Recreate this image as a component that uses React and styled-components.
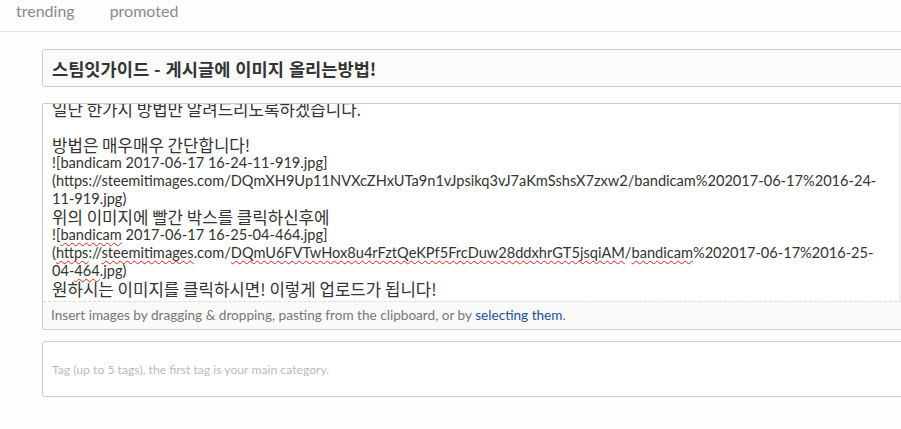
import styled, { createGlobalStyle } from 'styled-components';

const GlobalStyle = createGlobalStyle`
  body {
    margin: 0;
    background: #fdfdfd;
    overflow: hidden;
    font-family: Lato, "Noto Sans CJK KR", sans-serif;
  }
`;

const bodyLines = [
  { text: '일단 한가지 방법만 알려드리도록하겠습니다.' },
  { text: '\u00a0' },
  { text: '방법은 매우매우 간단합니다!' },
  { latin: true, parts: ['![bandicam 2017-06-17 16-24-11-919.jpg]'] },
  { latin: true, parts: ['(https://steemitimages.com/DQmXH9Up11NVXcZHxUTa9n1vJpsikq3vJ7aKmSshsX7zxw2/bandicam%202017-06-17%2016-24-'] },
  { latin: true, parts: ['11-919.jpg)'] },
  { text: '위의 이미지에 빨간 박스를 클릭하신후에' },
  { latin: true, parts: ['![', { bad: 'bandicam' }, ' 2017-06-17 16-25-04-464.jpg]'] },
  {
    latin: true,
    parts: [
      '(', { bad: 'https' }, '://', { bad: 'steemitimages' }, '.com/',
      { bad: 'DQmU6FVTwHox8u4rFztQeKPf5FrcDuw28ddxhrGT5jsqiAM' }, '/',
      { bad: 'bandicam' }, '%202017-06-17%2016-25-',
    ],
  },
  { latin: true, parts: ['04-', { bad: '464' }, '.jpg)'] },
  { text: '원하시는 이미지를 클릭하시면! 이렇게 업로드가 됩니다!' },
];

function App() {
  return (
    <>
      <GlobalStyle />
      <NavBar>
        <NavItem>trending</NavItem>
        <NavItem>promoted</NavItem>
      </NavBar>
      <Form>
        <TitleInput>스팀잇가이드 - 게시글에 이미지 올리는방법!</TitleInput>
        <EditorBox>
          <EditorMain>
            <TextArea>
              <Scrolled>
                {bodyLines.map((line, i) => (
                  <Line key={i} $latin={line.latin}>
                    {line.parts
                      ? line.parts.map((p, j) =>
                          typeof p === 'string' ? p : <Misspelled key={j}>{p.bad}</Misspelled>
                        )
                      : line.text}
                  </Line>
                ))}
              </Scrolled>
            </TextArea>
            <Scrollbar>
              <Thumb />
            </Scrollbar>
          </EditorMain>
          <DropHint>
            Insert images by dragging &amp; dropping, pasting from the clipboard, or by{' '}
            <HintLink>selecting them</HintLink>.
          </DropHint>
        </EditorBox>
        <TagInput>Tag (up to 5 tags), the first tag is your main category.</TagInput>
      </Form>
    </>
  );
}

const NavBar = styled.nav`
  display: flex;
  align-items: flex-start;
  gap: 35px;
  height: 31px;
  padding: 0 16px;
  background: #fefefe;
  border-bottom: 1px solid #e6e6e6;
`;

const NavItem = styled.span`
  font-family: Lato, sans-serif;
  font-size: 16px;
  line-height: 21px;
  color: #8a8a8a;
`;

const Form = styled.div`
  display: flex;
  flex-direction: column;
  width: 876px;
  margin-left: 42px;
`;

const TitleInput = styled.div`
  display: flex;
  align-items: center;
  box-sizing: border-box;
  height: 38px;
  margin-top: 17px;
  padding-left: 9px;
  border: 1px solid #cccccc;
  border-radius: 3px;
  background: #fbfbfb;
  font-family: "Noto Sans CJK KR", sans-serif;
  font-weight: 700;
  font-size: 17.6px;
  word-spacing: 1px;
  color: #333;
`;

const EditorBox = styled.div`
  display: flex;
  flex-direction: column;
  margin-top: 16px;
  border: 1px solid #cccccc;
  border-radius: 2px;
  background: #fafafa;
`;

const EditorMain = styled.div`
  display: flex;
  border-bottom: 1px dashed #dcdcdc;
`;

const TextArea = styled.div`
  flex: 1;
  height: 197px;
  overflow: hidden;
  padding-left: 9px;
  background: #fff;
  border-right: 1px solid #ececec;
`;

const Scrolled = styled.div`
  margin-top: -4px;
`;

const Line = styled.div`
  height: 18px;
  line-height: 18px;
  white-space: nowrap;
  color: #333;
  font-family: ${(p) => (p.$latin ? 'Lato, sans-serif' : '"Noto Sans CJK KR", sans-serif')};
  font-size: ${(p) => (p.$latin ? '14.6px' : '16.8px')};
`;

const Misspelled = styled.span`
  text-decoration: underline wavy #e02020;
  text-decoration-thickness: 1px;
  text-underline-offset: 2px;
  text-decoration-skip-ink: none;
`;

const Scrollbar = styled.div`
  width: 17px;
  padding-top: 92px;
  background: #f6f6f6;
`;

const Thumb = styled.div`
  height: 68px;
  margin-left: 2px;
  border-left: 1px solid #cfcfcf;
`;

const DropHint = styled.div`
  height: 27px;
  line-height: 27px;
  padding-left: 8px;
  font-family: Lato, sans-serif;
  font-size: 13.6px;
  color: #777;
`;

const HintLink = styled.span`
  color: #1a5099;
`;

const TagInput = styled.div`
  display: flex;
  align-items: center;
  box-sizing: border-box;
  height: 56px;
  margin-top: 11px;
  padding-left: 9px;
  border: 1px solid #cccccc;
  border-radius: 3px;
  background: #fff;
  font-family: Lato, sans-serif;
  font-size: 12.2px;
  color: #bbbbbb;
`;

export default App;
